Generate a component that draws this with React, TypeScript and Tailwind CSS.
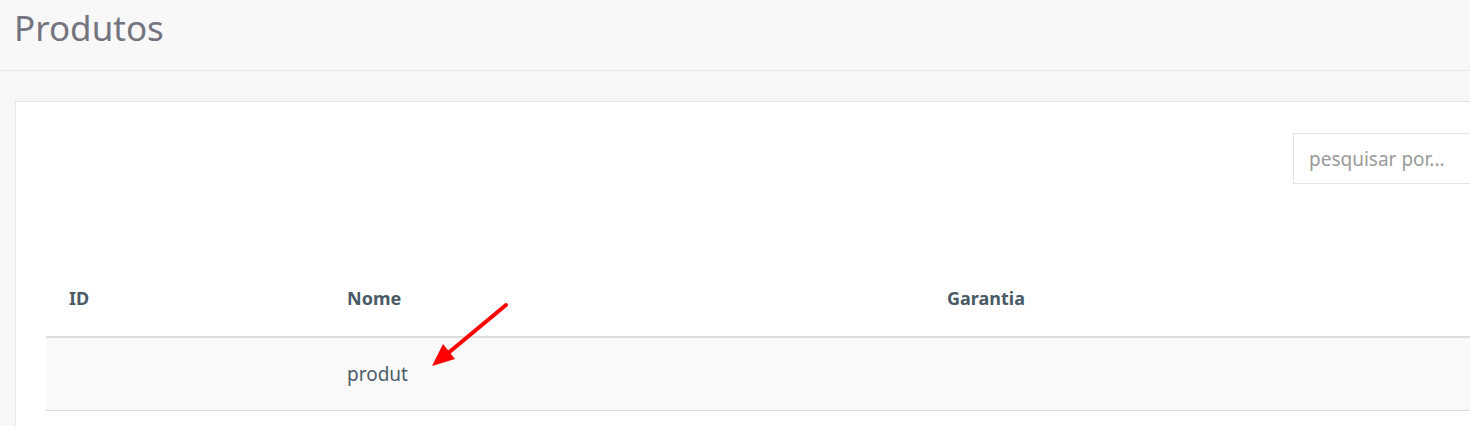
export default function App() {
  return (
    <div className="relative h-[426px] w-full overflow-hidden bg-[#f7f7f7] font-['Noto_Sans',sans-serif]">
      <div className="w-[1600px]">
        <div className="h-[71px] border-b border-[#e7e7e7] bg-[#f8f8f8] pl-[14px] pt-[4px]">
          <h1 className="text-[35px] leading-[48px] text-[#74747e]">Produtos</h1>
        </div>

        <div className="ml-[15px] mr-[15px] mt-[30px] border border-[#e6e6e6] bg-white px-[30px] pt-[31px]">
          <div className="flex justify-end">
            <input
              placeholder="pesquisar por..."
              className="h-[51px] w-[261px] border border-[#e3e3e3] px-[15px] text-[19px] text-[#555] outline-none placeholder:text-[#9a9a9a]"
            />
          </div>

          <table className="mt-[77px] w-full border-collapse text-left">
            <thead>
              <tr className="border-b-2 border-[#dddddd]">
                <th className="h-[76px] w-[278px] px-[23px] text-[18px] font-bold text-[#4a5a66]">ID</th>
                <th className="h-[76px] w-[600px] px-[23px] text-[18px] font-bold text-[#4a5a66]">Nome</th>
                <th className="h-[76px] px-[23px] text-[18px] font-bold text-[#4a5a66]">Garantia</th>
              </tr>
            </thead>
            <tbody>
              <tr className="border-b border-[#dddddd] bg-[#f9f9f9]">
                <td className="h-[73px] px-[23px]"></td>
                <td className="h-[73px] px-[23px] text-[19px] text-[#4d5d6a]">produt</td>
                <td className="h-[73px] px-[23px]"></td>
              </tr>
            </tbody>
          </table>
          <div className="h-[40px]"></div>
        </div>
      </div>

      <svg className="pointer-events-none absolute left-0 top-0" width="1470" height="426">
        <line x1="506" y1="305" x2="447" y2="354" stroke="#ff0000" strokeWidth="4" strokeLinecap="round" />
        <polygon points="432,366 455,359 443,344" fill="#ff0000" />
      </svg>
    </div>
  )
}
